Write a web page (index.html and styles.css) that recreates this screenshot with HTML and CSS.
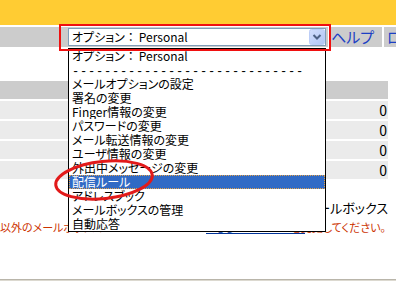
FILE: index.html
```html
<!DOCTYPE html>
<html lang="ja">
<head>
<meta charset="utf-8">
<link rel="stylesheet" href="styles.css">
</head>
<body>
<div class="page">
  <header class="topbar"></header>
  <nav class="nav">
    <div class="nav-main">
      <div class="combo">
        <span class="combo-text">オプション<span class="colon">：</span>Personal</span>
        <span class="combo-btn">
          <svg width="16" height="16" viewBox="0 0 16 16">
            <defs>
              <linearGradient id="g" x1="0" y1="0" x2="1" y2="1">
                <stop offset="0" stop-color="#D2DEFD"/>
                <stop offset="1" stop-color="#B0C5F5"/>
              </linearGradient>
            </defs>
            <rect x="0.5" y="0.5" width="15" height="15" rx="2" fill="url(#g)" stroke="#BCCDF7"/>
            <path d="M4.5 6 L8 9.5 L11.5 6" fill="none" stroke="#4D6185" stroke-width="2"/>
          </svg>
        </span>
      </div>
    </div>
    <a class="nav-cell">ヘルプ</a>
    <a class="nav-cell nav-cut">ログアウト</a>
  </nav>

  <div class="stats">
    <div class="stats-head"></div>
    <div class="stats-row"><span class="num">0</span></div>
    <div class="stats-row"><span class="num">0</span></div>
    <div class="stats-row"><span class="num">0</span></div>
    <div class="stats-row"><span class="num">0</span></div>
  </div>

  <p class="note">受信メールボックス</p>
  <p class="warn"><span class="warn-start">以外のメールボックス</span><span class="warn-link">こちら</span><span class="warn-end">を変更してください。</span></p>

  <div class="statusline"></div>

  <ul class="dropdown">
    <li>オプション<span class="colon">：</span>Personal</li>
    <li><span class="dashes">-----------------------------</span></li>
    <li>メールオプションの設定</li>
    <li>署名の変更</li>
    <li>Finger情報の変更</li>
    <li>パスワードの変更</li>
    <li>メール転送情報の変更</li>
    <li>ユーザ情報の変更</li>
    <li>外出中メッセージの変更</li>
    <li class="sel">配信ルール</li>
    <li>アドレスブック</li>
    <li>メールボックスの管理</li>
    <li>自動応答</li>
  </ul>

  <div class="annot-box"></div>
  <svg class="annot-ellipse" width="110" height="50" viewBox="0 0 110 50">
    <ellipse cx="54" cy="25" rx="48.5" ry="18.5" transform="rotate(-6 54 25)" fill="none" stroke="#E21A1A" stroke-width="3"/>
  </svg>
</div>
</body>
</html>
```
FILE: styles.css
```css
html, body {
  margin: 0;
  padding: 0;
}
body {
  width: 396px;
  height: 296px;
  overflow: hidden;
  background: #fff;
  font-family: "Noto Sans CJK JP", "Noto Sans", sans-serif;
  font-feature-settings: "palt";
}
.page {
  position: relative;
  width: 396px;
  height: 296px;
  overflow: hidden;
}
.topbar {
  height: 25px;
  background: #FFCC33;
  margin-bottom: 2px;
}
.nav {
  display: flex;
  gap: 2px;
  height: 20px;
  overflow: hidden;
}
.nav-main {
  flex: none;
  width: 328px;
  box-sizing: border-box;
  background: #CCCCCC;
  padding: 1px 0 0 68px;
}
.combo {
  width: 258px;
  height: 18px;
  box-sizing: border-box;
  border: 1px solid #7F9DB9;
  background: #fff;
  display: flex;
  align-items: center;
  justify-content: space-between;
}
.combo-text {
  font-size: 12px;
  line-height: 16px;
  padding-left: 3px;
  color: #000;
  white-space: nowrap;
}
.colon {
  font-feature-settings: normal;
  margin-right: 2px;
}
.combo-btn {
  width: 16px;
  height: 16px;
  display: flex;
}
.nav-cell {
  flex: none;
  width: 52px;
  box-sizing: border-box;
  background: #CCCCCC;
  color: #1C3FC4;
  font-size: 15px;
  line-height: 20px;
  padding-left: 1px;
  white-space: nowrap;
  overflow: hidden;
}
.nav-cut {
  width: 60px;
  padding-left: 3px;
}
.stats {
  margin-top: 34px;
  width: 388px;
  display: flex;
  flex-direction: column;
  gap: 2px;
}
.stats-head {
  height: 18px;
  background: #CCCCCC;
}
.stats-row {
  height: 18px;
  background: #EBEBEB;
  display: flex;
  justify-content: flex-end;
  align-items: center;
  padding: 0 1px 0 4px;
  font-size: 14px;
  line-height: 18px;
  color: #000;
}
.note {
  margin: 21px 0 0;
  width: 388px;
  text-align: right;
  font-size: 13px;
  line-height: 16px;
  color: #000;
}
.warn {
  margin: 5px 0 0;
  width: 388px;
  display: grid;
  grid-template-columns: 206px 99px 1fr;
  font-size: 11px;
  line-height: 12px;
  color: #CC3300;
  white-space: nowrap;
}
.warn-start {
  grid-column: 1;
  grid-row: 1;
}
.warn-link {
  grid-column: 2;
  grid-row: 1;
  color: #003399;
  border-bottom: 1px solid #003399;
  overflow: hidden;
}
.warn-end {
  grid-column: 1 / -1;
  grid-row: 1;
  justify-self: end;
  padding-right: 2px;
}
.statusline {
  margin-top: 45px;
  height: 0;
  border-top: 1px solid #B9B5AA;
  border-bottom: 1px solid #DCD9D0;
}
.dropdown {
  position: absolute;
  left: 68px;
  top: 48px;
  width: 258px;
  box-sizing: border-box;
  margin: 0;
  padding: 0;
  list-style: none;
  border: 1px solid #000;
  background: #fff;
  font-size: 12px;
  color: #000;
}
.dropdown li {
  height: 14px;
  line-height: 14px;
  padding-left: 3px;
  white-space: nowrap;
  overflow: hidden;
}
.dropdown li.sel {
  background: #316AC5;
  color: #fff;
  outline: 1px dotted #E3A24A;
  outline-offset: -1px;
}
.dashes {
  font-family: "Liberation Mono", monospace;
  font-size: 12px;
  letter-spacing: 0.8px;
}
.annot-box {
  position: absolute;
  left: 59px;
  top: 24px;
  width: 272px;
  height: 27px;
  box-sizing: border-box;
  border: 2px solid #F01010;
}
.annot-ellipse {
  position: absolute;
  left: 50px;
  top: 155px;
}
```
